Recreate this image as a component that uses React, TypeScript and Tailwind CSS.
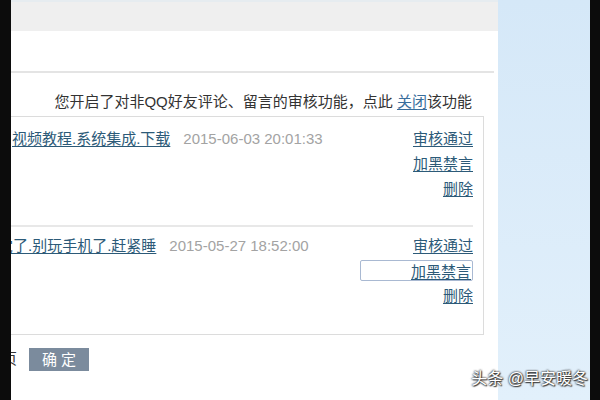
import React from "react";

const cjk = "font-['Liberation_Sans','Noto_Sans_CJK_SC',sans-serif]";

interface Item {
  title: string;
  cut: string;
  date: string;
  focus?: boolean;
}

const items: Item[] = [
  { title: "视频教程.系统集成.下载", cut: "ml-[1px]", date: "2015-06-03 20:01:33" },
  { title: "觉了.别玩手机了.赶紧睡", cut: "ml-[-13px]", date: "2015-05-27 18:52:00", focus: true },
];

function Actions({ focus }: { focus?: boolean }) {
  return (
    <div className="flex flex-col items-end leading-[25px] text-[#2c5a78]">
      <a className="underline underline-offset-2">审核通过</a>
      {focus ? (
        <a className="underline underline-offset-2 w-[113px] h-[21px] leading-[21px] my-[2px] text-right border border-[#a9b9d2] rounded-[2px] pr-[1px]">加黑禁言</a>
      ) : (
        <a className="underline underline-offset-2">加黑禁言</a>
      )}
      <a className="underline underline-offset-2">删除</a>
    </div>
  );
}

export default function App() {
  return (
    <div className={`w-[600px] h-[400px] bg-[#0c0c0c] flex overflow-hidden relative ${cjk}`}>
      {/* left edge */}
      <div className="w-[11px] shrink-0" />

      {/* main panel */}
      <div className="w-[487px] shrink-0 bg-white flex flex-col overflow-hidden text-[15px]">
        <div className="h-[2px] bg-[#e6ecf0]" />
        <div className="h-[29px] bg-[#efefef]" />
        <div className="h-[40px]" />
        <div className="h-[2px] bg-[#e4e4e4] mr-[4px]" />

        {/* notice */}
        <div className="h-[44px] flex items-center justify-end pr-[26px] pt-[14px] text-[#333]">
          <span>
            您开启了对非QQ好友评论、留言的审核功能，点此{" "}
            <a className="text-[#3a6e9c] underline underline-offset-2">关闭</a>该功能
          </span>
        </div>

        {/* review box */}
        <div className="mt-[-1px] mr-[14px] border-t border-r border-b border-[#dcdcdc] h-[219px] flex flex-col">
          {items.map((item, i) => (
            <div key={i} className="flex flex-col">
              {i > 0 && <div className="h-[2px] bg-[#e8e8e8] mr-[10px]" />}
              <div className={`flex justify-between pr-[10px] ${i === 0 ? "pt-[9px] pb-[24px]" : "pt-[6px] pb-[24px]"}`}>
                <div className={`flex gap-[13px] leading-[25px] h-[25px] whitespace-nowrap ${item.cut}`}>
                  <a className="text-[#2c5a78] underline underline-offset-2">{item.title}</a>
                  <span className="text-[#a3a3a3]">{item.date}</span>
                </div>
                <Actions focus={item.focus} />
              </div>
            </div>
          ))}
        </div>

        {/* footer */}
        <div className="flex items-center mt-[13px] whitespace-nowrap">
          <span className="ml-[-9px] text-[#333] w-[15px]">页</span>
          <button className="ml-[12px] w-[60px] h-[23px] bg-[#7b8b9d] text-white text-[15px] leading-[23px] tracking-[4px] pl-[4px]">
            确定
          </button>
        </div>
      </div>

      {/* right sidebar */}
      <div className="w-[92px] shrink-0 bg-gradient-to-b from-[#d5e8f8] to-[#e2f0fb]" />
      <div className="w-[10px] shrink-0" />

      {/* watermark */}
      <div className="absolute right-[12px] bottom-[9px] text-white text-[16px] [text-shadow:0_0_2px_#333,0_0_2px_#333,1px_1px_1px_#444]">
        头条 @早安暖冬
      </div>
    </div>
  );
}
